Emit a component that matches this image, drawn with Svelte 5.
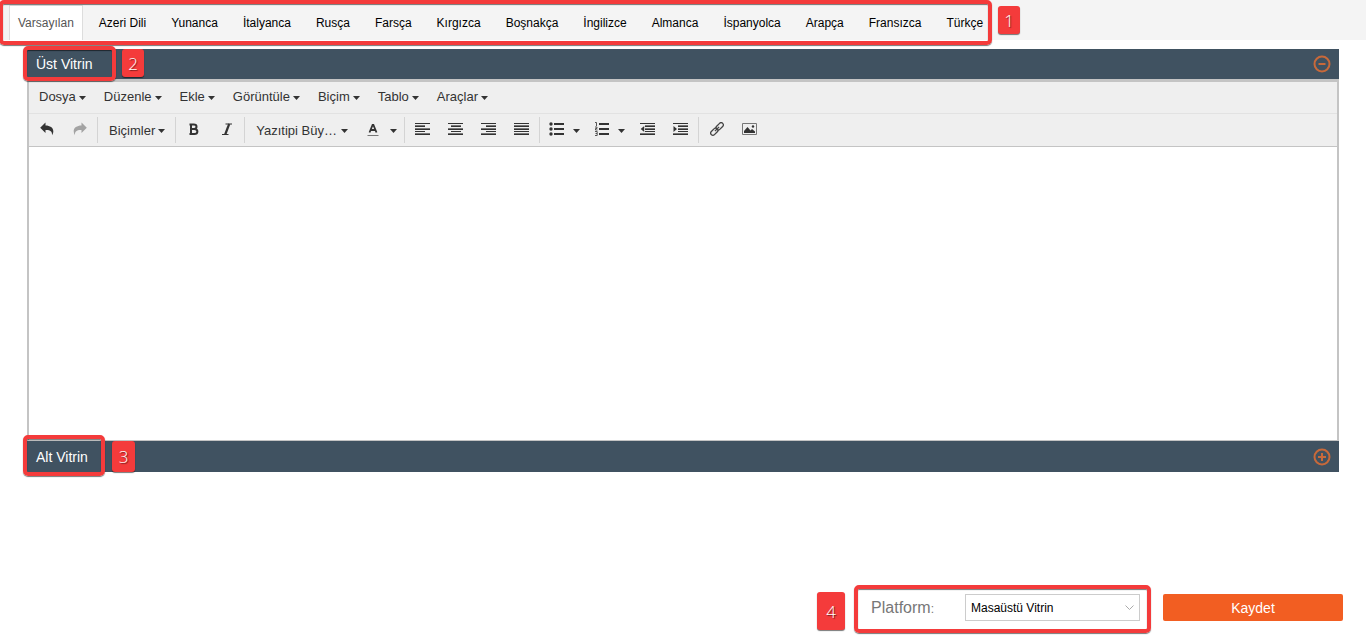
<script>
  const languages = [
    'Varsayılan', 'Azeri Dili', 'Yunanca', 'İtalyanca', 'Rusça', 'Farsça', 'Kırgızca',
    'Boşnakça', 'İngilizce', 'Almanca', 'İspanyolca', 'Arapça', 'Fransızca', 'Türkçe'
  ];
  const menus = ['Dosya', 'Düzenle', 'Ekle', 'Görüntüle', 'Biçim', 'Tablo', 'Araçlar'];
  const aligns = [
    { label: 'Sola hizala', x: 0 },
    { label: 'Ortala', x: 3 },
    { label: 'Sağa hizala', x: 5 },
    { label: 'İki yana yasla', x: -1 }
  ];
  let active = $state('Varsayılan');
  let content = $state('');
  let platform = $state('Masaüstü Vitrin');
</script>

{#snippet caret()}
  <svg class="caret" width="7" height="4" viewBox="0 0 7 4" aria-hidden="true"><path d="M0 0h7L3.5 4z" /></svg>
{/snippet}

{#snippet toggle(open)}
  <svg width="18" height="18" viewBox="0 0 18 18" fill="none" stroke="#c8693a" stroke-width="2" aria-hidden="true">
    <circle cx="9" cy="9" r="7.5" />
    <path d={open ? 'M5.5 9h7' : 'M5 9h8M9 5v8'} />
  </svg>
{/snippet}

<div class="page">
  <nav class="languages">
    <div class="tabs">
      {#each languages as lang}
        <button class:active={active === lang} onclick={() => (active = lang)}>{lang}</button>
      {/each}
      <span class="frame frame-tabs"></span>
      <span class="badge badge-tabs">1</span>
    </div>
  </nav>

  <main>
    <section>
      <header>
        <h2>Üst Vitrin</h2>
        <button class="toggle" aria-label="Daralt">{@render toggle(true)}</button>
        <span class="frame frame-top"></span>
        <span class="badge badge-top">2</span>
      </header>
      <div class="editor">
        <div class="menubar">
          {#each menus as menu}
            <button>{menu}{@render caret()}</button>
          {/each}
        </div>
        <div class="toolbar">
          <div class="group">
            <button class="tool" aria-label="Geri al">
              <svg width="14" height="14" viewBox="0 0 14 14" fill="#333"><path d="M5.500 .5v3c6 0 10 4 6.500 9.800.3-3.700-1.500-5.600-6.500-5.300v3L.2 5.700z" /></svg>
            </button>
            <button class="tool faded" aria-label="Yinele" disabled>
              <svg width="14" height="14" viewBox="0 0 14 14" fill="#333"><path d="M8.500 .5v3c-6 0-10 4-6.500 9.800-.3-3.700 1.500-5.600 6.500-5.300v3l5.300-5.300z" /></svg>
            </button>
          </div>
          <div class="group">
            <button class="formats">Biçimler{@render caret()}</button>
          </div>
          <div class="group">
            <button class="tool" aria-label="Kalın">
              <svg width="14" height="14" viewBox="0 0 14 14" fill="none" stroke="#333" stroke-width="2"><path d="M2.500 2.500h4.300c3.600 0 3.600 4.500 0 4.500H4M4 7h3.300c4.100 0 4.100 5 0 5H2.500M4 2v10.500" /></svg>
            </button>
            <button class="tool" aria-label="İtalik">
              <svg width="14" height="14" viewBox="0 0 14 14" fill="none" stroke="#333"><path stroke-width="1.200" d="M5.500 2H12M2 12.500h6.500" /><path stroke-width="2.200" d="M9.200 2l-4 10.500" /></svg>
            </button>
          </div>
          <div class="group">
            <button class="sizes">Yazıtipi Büy…{@render caret()}</button>
            <button class="main" aria-label="Metin rengi">
              <svg width="14" height="14" viewBox="0 0 14 14" fill="none" stroke="#333"><path stroke-width="1.800" d="M3.500 10.500L6.600 3h.8l3.100 7.500M4.800 8h4.400" /><path stroke="#777" d="M1.500 13.500h11" /></svg>
            </button>
            <button class="arrow" aria-label="Renk seç">{@render caret()}</button>
          </div>
          <div class="group">
            {#each aligns as align}
              <button class="tool" aria-label={align.label}>
                <svg width="15" height="14" viewBox="0 0 15 14" fill="#333">
                  <path d="M0 1h15v1H0zM0 7h15v1H0zM0 12h15v1H0z" />
                  <path fill="#777" d="M0 6h15v1H0zM0 11h15v1H0z" />
                  {#if align.x < 0}
                    <path fill="#777" d="M0 3h15v2H0z" />
                    <path d="M0 4h15v1H0zM0 9h15v1H0z" />
                  {:else}
                    <path fill="#777" d="M{align.x} 3h10v2h-10z" />
                    <path d="M{align.x} 4h10v1h-10zM{align.x} 9h10v1h-10z" />
                  {/if}
                </svg>
              </button>
            {/each}
          </div>
          <div class="group">
            <button class="main" aria-label="Madde imleri">
              <svg width="15" height="14" viewBox="0 0 15 14" fill="#333"><circle cx="2" cy="2" r="1.700" /><circle cx="2" cy="7" r="1.700" /><circle cx="2" cy="12" r="1.700" /><path d="M5 1h10v2H5zM5 6h10v2H5zM5 11h10v2H5z" /></svg>
            </button>
            <button class="arrow" aria-label="Madde imi seç">{@render caret()}</button>
            <button class="main" aria-label="Numaralar">
              <svg width="15" height="14" viewBox="0 0 15 14" fill="#333"><path d="M5 1h10v2H5zM5 6h10v2H5zM5 11h10v2H5z" /><path fill="none" stroke="#444" stroke-width=".9" d="M1 .5h1.500V4M1 5h2v1.500H1.500V8H3.500M1 9.500h2.200v4H1M1.500 11.500h1.500" /></svg>
            </button>
            <button class="arrow" aria-label="Numara seç">{@render caret()}</button>
            <button class="tool" aria-label="Girintiyi azalt">
              <svg width="15" height="14" viewBox="0 0 15 14" fill="#333"><path d="M0 1h15v1H0zM5 4h10v1H5zM5 7h10v1H5zM5 9h10v1H5zM0 12h15v1H0zM4.200 4v6L.7 7z" /><path fill="#777" d="M5 3h10v1H5zM5 6h10v1H5zM0 11h15v1H0z" /></svg>
            </button>
            <button class="tool" aria-label="Girintiyi artır">
              <svg width="15" height="14" viewBox="0 0 15 14" fill="#333"><path d="M0 1h15v1H0zM5 4h10v1H5zM5 7h10v1H5zM5 9h10v1H5zM0 12h15v1H0zM.5 4v6L4 7z" /><path fill="#777" d="M5 3h10v1H5zM5 6h10v1H5zM0 11h15v1H0z" /></svg>
            </button>
          </div>
          <div class="group">
            <button class="tool" aria-label="Bağlantı">
              <svg width="14" height="14" viewBox="0 0 14 14" fill="none" stroke="#444" stroke-width="1.300"><g transform="rotate(-45 7 7)"><rect x="-1" y="4.800" width="8.500" height="4.400" rx="2.200" /><rect x="6.500" y="4.800" width="8.500" height="4.400" rx="2.200" /><path d="M4 7h6" /></g></svg>
            </button>
            <button class="tool" aria-label="Resim">
              <svg width="15" height="14" viewBox="0 0 15 14" fill="#333"><path fill="none" stroke="#777" d="M.5 1.500h14v11H.5z" /><path d="M2 11V9l3.500-4L8.500 8.500 10 7 13 9.500V11z" /><circle cx="11" cy="4.500" r="1.200" /></svg>
            </button>
          </div>
        </div>
        <textarea aria-label="Üst vitrin içeriği" bind:value={content}></textarea>
      </div>
    </section>

    <section>
      <header>
        <h2>Alt Vitrin</h2>
        <button class="toggle" aria-label="Genişlet">{@render toggle(false)}</button>
        <span class="frame frame-bottom"></span>
        <span class="badge badge-bottom">3</span>
      </header>
    </section>
  </main>

  <footer>
    <div class="platform">
      <label for="platform">Platform<small>:</small></label>
      <div class="select">
        <select id="platform" bind:value={platform}>
          <option>Masaüstü Vitrin</option>
          <option>Mobil Vitrin</option>
        </select>
        <svg width="9" height="6" viewBox="0 0 9 6" fill="none" stroke="#aaa" aria-hidden="true"><path d="M.5.5l4 4 4-4" /></svg>
      </div>
      <span class="frame frame-platform"></span>
      <span class="badge badge-platform">4</span>
    </div>
    <button class="save">Kaydet</button>
  </footer>
</div>

<style>
  :global(body) {
    background: #fff;
  }
  .page {
    font-family: "Liberation Sans", Arial, sans-serif;
    font-size: 13px;
    color: #333;
  }
  button {
    margin: 0;
    padding: 0;
    border: 0;
    background: none;
    font: inherit;
    color: inherit;
    white-space: nowrap;
  }
  svg {
    display: block;
    flex: none;
  }

  .languages {
    display: flex;
    height: 40px;
    background: #f4f4f4;
  }
  .tabs {
    position: relative;
    display: flex;
    align-items: flex-end;
    gap: 7px;
    padding-left: 9px;
  }
  .tabs button {
    height: 35px;
    padding: 0 8px;
    border: 1px solid transparent;
    border-bottom: 0;
    font-size: 12px;
    color: #000;
  }
  .tabs button.active {
    background: #fff;
    border-color: #ddd;
    color: #555;
  }

  .frame {
    position: absolute;
    box-sizing: border-box;
    border: 4px solid #f43b3b;
    border-radius: 5px;
    box-shadow: 0 1px 1px #0008, inset 0 1px 1px #0008;
    pointer-events: none;
    z-index: 1;
  }
  .badge {
    position: absolute;
    display: flex;
    align-items: center;
    justify-content: center;
    width: 22px;
    height: 28px;
    border-radius: 3px;
    background: #f43b3b;
    box-shadow: 0 1px 1px #0008;
    color: #fff;
    font: 300 17px "Open Sans", sans-serif;
    text-shadow: 1px 1px 1px #0008;
    z-index: 1;
  }
  .frame-tabs {
    inset: 0 0 -5px -1px;
  }
  .badge-tabs {
    left: calc(100% + 6px);
    top: 6px;
  }
  .frame-top {
    left: -3px;
    top: -3px;
    width: 93px;
    height: 35px;
  }
  .badge-top {
    left: 96px;
    top: 0;
  }
  .frame-bottom {
    left: -3px;
    top: -6px;
    width: 82px;
    height: 41px;
  }
  .badge-bottom {
    left: 86px;
    top: 0;
    width: 23px;
    height: 31px;
  }
  .frame-platform {
    inset: -9px -11px -12px -17px;
  }
  .badge-platform {
    right: calc(100% + 26px);
    top: -2px;
    width: 28px;
    height: 38px;
  }

  main {
    padding: 9px 27px 0 26px;
  }
  header {
    position: relative;
    display: flex;
    align-items: center;
    justify-content: space-between;
    height: 30px;
    padding: 0 8px 0 10px;
    background: #405261;
    color: #fff;
  }
  section:last-child header {
    height: 31px;
  }
  h2 {
    margin: 0;
    font-size: 14px;
    font-weight: 400;
  }
  .editor {
    margin-left: 1px;
    border: solid #c4c4c4;
    border-width: 3px 2px 1px;
  }
  .menubar,
  .toolbar {
    display: flex;
    background: #efefef;
  }
  .menubar {
    box-sizing: border-box;
    gap: 18px;
    height: 32px;
    padding: 0 0 2px 10px;
    border-bottom: 1px solid #e2e2e2;
  }
  .menubar button,
  .group button {
    display: flex;
    align-items: center;
    gap: 3px;
  }
  .caret {
    margin-top: 2px;
    fill: #333;
  }
  .toolbar {
    height: 32px;
    align-items: center;
    border-bottom: 1px solid #c4c4c4;
  }
  .group {
    display: flex;
    height: 26px;
    padding: 0 1px;
    border-right: 1px solid #d4d4d4;
  }
  .group:last-child {
    border-right: 0;
  }
  .group .tool {
    justify-content: center;
    width: 33px;
  }
  .group .tool,
  .group .main {
    padding-bottom: 2px;
  }
  .faded {
    opacity: 0.4;
  }
  .group .formats {
    padding: 0 9px 0 10px;
  }
  .group .sizes {
    justify-content: space-between;
    width: 112px;
    padding: 0 10px;
  }
  .group .main {
    justify-content: center;
    width: 30px;
  }
  .group .arrow {
    width: 15px;
    padding-left: 2px;
  }
  textarea {
    display: block;
    box-sizing: border-box;
    width: 100%;
    height: 293px;
    padding: 8px;
    border: 0;
    outline: 0;
    resize: none;
    font: inherit;
  }

  footer {
    display: flex;
    align-items: center;
    justify-content: flex-end;
    gap: 23px;
    padding: 122px 23px 14px;
  }
  .platform {
    position: relative;
    display: flex;
    align-items: center;
    gap: 31px;
  }
  label {
    font-size: 16px;
    color: #777;
  }
  small {
    font-size: 12px;
  }
  .select {
    position: relative;
    width: 175px;
  }
  select {
    display: block;
    box-sizing: border-box;
    width: 100%;
    height: 27px;
    padding: 0 20px 0 5px;
    appearance: none;
    border: 1px solid #ccc;
    border-radius: 0;
    background: #fff;
    color: #000;
    font: 12px "Liberation Sans", Arial, sans-serif;
  }
  .select svg {
    position: absolute;
    right: 6px;
    top: 11px;
    pointer-events: none;
  }
  .save {
    width: 180px;
    height: 27px;
    border-radius: 2px;
    background: #f25e22;
    color: #fff;
    font-size: 14px;
  }
</style>
